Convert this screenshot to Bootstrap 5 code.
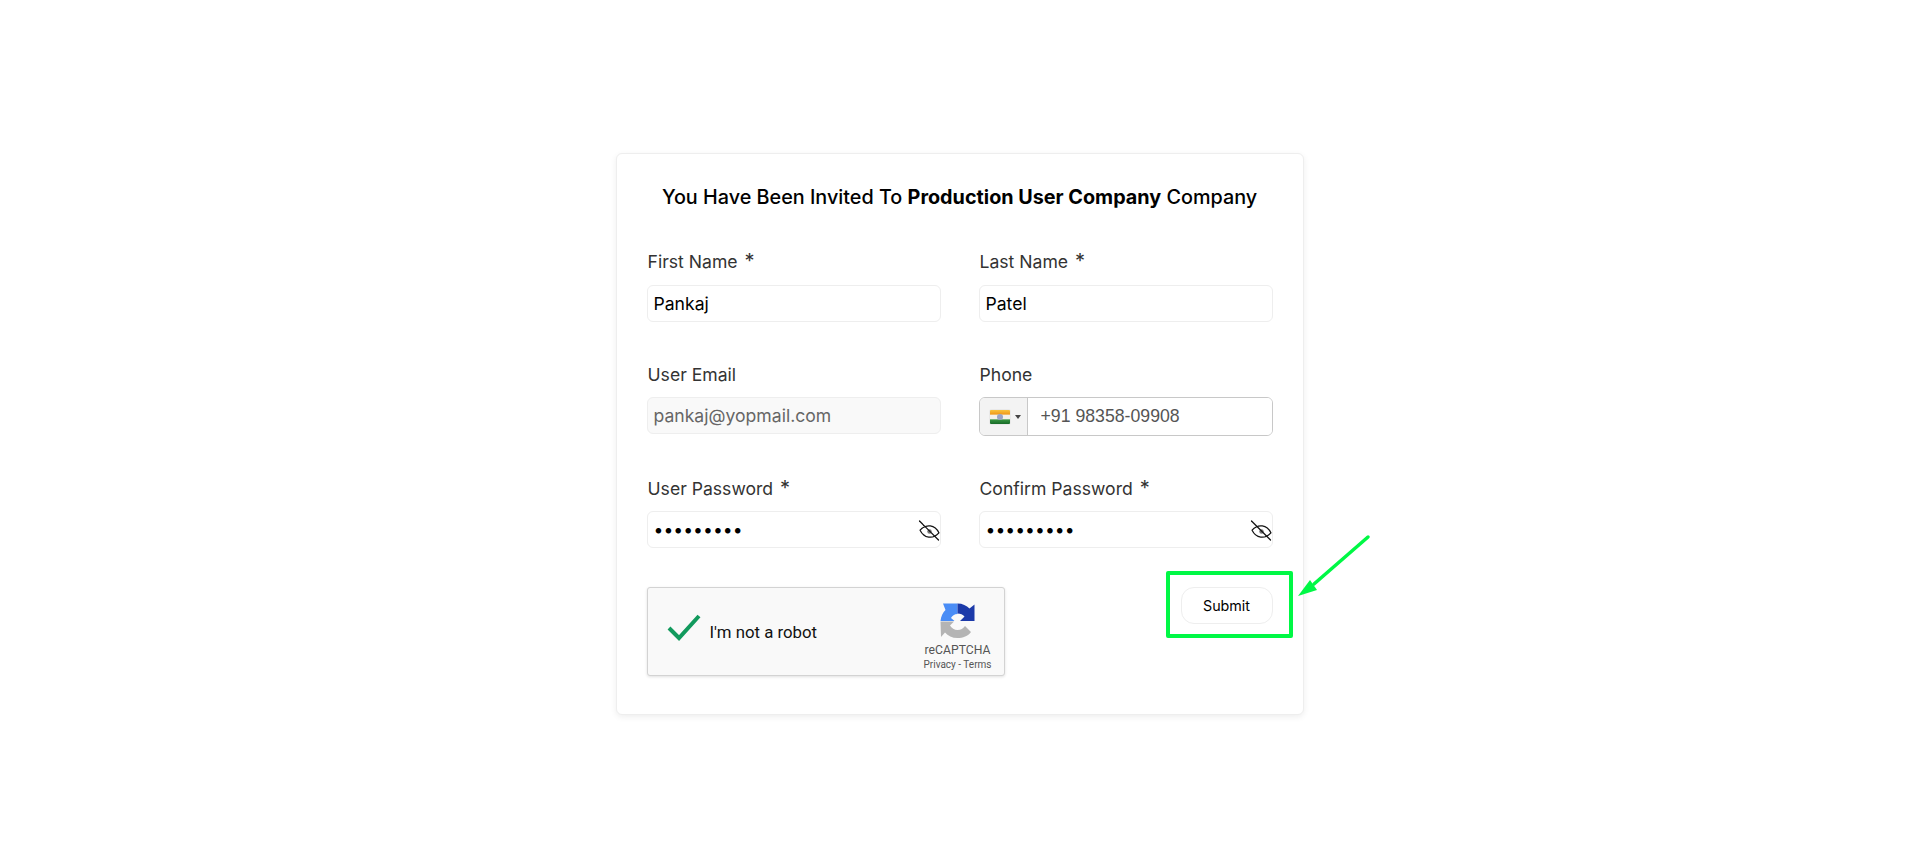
<!DOCTYPE html>
<html lang="en">
  <head>
    <meta charset="UTF-8" />
    <meta name="viewport" content="width=device-width, initial-scale=1.0" />
    <title>Invitation</title>
    <link href="https://cdn.jsdelivr.net/npm/bootstrap@5.3.0/dist/css/bootstrap.min.css" rel="stylesheet" />
    <style>
      body { font-family: "Inter", "Liberation Sans", sans-serif; background: #fff; }
      .page-wrap { min-height: 868px; position: relative; }
      .invite-box { width: 688px; height: 562px; padding: 29px 30px; border: 1px solid #eeeeee; border-radius: 6px; box-shadow: 0 2px 6px rgba(0,0,0,.07); }
      .invite-title { font-size: 19.8px; line-height: 28px; font-weight: 500; color: #000; margin-bottom: 39px; white-space: nowrap; }
      .invite-title b { font-weight: 700; }
      .form-rows { --bs-gutter-x: 38px; }
      .field-block { height: 113px; }
      .field-block-mid { height: 114px; }
      .field-label { font-size: 17.6px; line-height: 24px; font-weight: 400; color: #333; margin-bottom: 11px; padding-left: 1px; display: block; }
      .label-tight { margin-bottom: 10px; }
      .req { font-size: 20px; line-height: 16px; margin-left: 2px; }
      .field-input { height: 37px; padding: 0 6px; font-size: 17.6px; color: #000; border: 1px solid #eeeeee; border-radius: 6px; box-shadow: none; }
      .field-input:disabled { background: #f9f9f9; color: #666; border-color: #eeeeee; }
      .pwd-wrap { position: relative; }
      .eye-icon { position: absolute; right: 0; top: 5px; width: 24px; height: 26px; }
      .phone-wrap { height: 39px; border: 1px solid #c8c8c8; border-radius: 6px; overflow: hidden; }
      .flag-btn { width: 48px; background: #f3f3f3; border-right: 1px solid #c8c8c8; padding-left: 10px; }
      .flag-img { width: 20px; height: 14px; background: linear-gradient(#f9c33c 0, #f09a1c 30%, #f4f1ea 36% 64%, #34923f 70%, #176a28 100%); border-radius: 1px; box-shadow: 0 0 1px rgba(0,0,0,.4); position: relative; }
      .flag-img::after { content: ""; position: absolute; left: 7px; top: 4px; width: 6px; height: 6px; border-radius: 50%; background: #9aa4c4; }
      .flag-caret { width: 0; height: 0; margin-left: 5px; border-left: 3px solid transparent; border-right: 3px solid transparent; border-top: 4px solid #444; }
      .phone-input { border: 0; outline: 0; flex: 1; min-width: 0; padding-left: 13px; font-family: "Liberation Sans", sans-serif; font-size: 17.7px; color: #555; background: #fff; }
      .captcha-row { margin-top: -3px; }
      .captcha-box { width: 358px; height: 89px; background: #f9f9f9; border: 1px solid #d3d3d3; border-radius: 3px; box-shadow: 0 1px 3px rgba(0,0,0,.12); font-family: "Roboto", "Liberation Sans", sans-serif; padding-right: 12px; }
      .captcha-check { width: 34px; height: 28px; margin-left: 19px; margin-right: 9px; margin-top: -10px; }
      .captcha-label { font-size: 16.8px; color: #111; margin-top: 3px; }
      .captcha-side { width: 68px; padding-top: 15px; }
      .captcha-side svg { display: block; margin: 0 auto; }
      .captcha-name { font-size: 12.2px; line-height: 14px; color: #555; margin-top: 5px; white-space: nowrap; }
      .captcha-links { font-size: 10px; line-height: 12px; color: #555; white-space: nowrap; margin-top: 2px; }
      .send-btn { width: 92px; height: 37px; padding: 0; font-size: 14.3px; font-weight: 400; color: #000; background: #fff; border: 1px solid #eeeeee; border-radius: 13px; }
      .send-btn:hover { background: #fff; color: #000; border-color: #eee; }
      .green-frame { position: absolute; left: 1166px; top: 571px; width: 127px; height: 67px; border: 4px solid #00f845; border-radius: 2px; pointer-events: none; }
      .green-arrow { position: absolute; left: 1290px; top: 530px; width: 85px; height: 72px; pointer-events: none; }
    </style>
  </head>
  <body>
    <div class="page-wrap d-flex align-items-center justify-content-center">
      <div class="invite-box bg-white">
        <h5 class="invite-title text-center">You Have Been Invited To <b>Production User Company</b> Company</h5>

        <div class="row form-rows">
          <div class="col-6 field-block">
            <label class="field-label">First Name <span class="req">*</span></label>
            <input type="text" class="form-control field-input" value="Pankaj" />
          </div>
          <div class="col-6 field-block">
            <label class="field-label">Last Name <span class="req">*</span></label>
            <input type="text" class="form-control field-input" value="Patel" />
          </div>
          <div class="col-6 field-block-mid">
            <label class="field-label label-tight">User Email</label>
            <input type="text" class="form-control field-input" value="pankaj@yopmail.com" disabled />
          </div>
          <div class="col-6 field-block-mid">
            <label class="field-label label-tight">Phone</label>
            <div class="phone-wrap d-flex">
              <div class="flag-btn d-flex align-items-center">
                <div class="flag-img"></div>
                <div class="flag-caret"></div>
              </div>
              <input type="text" class="phone-input" value="+91 98358-09908" />
            </div>
          </div>
          <div class="col-6 field-block">
            <label class="field-label label-tight">User Password <span class="req">*</span></label>
            <div class="pwd-wrap">
              <input type="password" class="form-control field-input" value="123456789" />
              <svg class="eye-icon" viewBox="0 0 24 26" fill="none" stroke="#111" stroke-width="1.2" stroke-linecap="round">
                <path d="M3 15.500 C8 8 17 8 22 15.500 C17 23 8 23 3 15.500 Z" transform="rotate(8 12.500 15.500)" />
                <circle cx="12.500" cy="15.500" r="2.200" fill="#777" stroke="none" />
                <path d="M2.500 5 L21.500 24" />
              </svg>
            </div>
          </div>
          <div class="col-6 field-block">
            <label class="field-label label-tight">Confirm Password <span class="req">*</span></label>
            <div class="pwd-wrap">
              <input type="password" class="form-control field-input" value="123456789" />
              <svg class="eye-icon" viewBox="0 0 24 26" fill="none" stroke="#111" stroke-width="1.2" stroke-linecap="round">
                <path d="M3 15.500 C8 8 17 8 22 15.500 C17 23 8 23 3 15.500 Z" transform="rotate(8 12.500 15.500)" />
                <circle cx="12.500" cy="15.500" r="2.200" fill="#777" stroke="none" />
                <path d="M2.500 5 L21.500 24" />
              </svg>
            </div>
          </div>
        </div>

        <div class="captcha-row d-flex justify-content-between align-items-start">
          <div class="captcha-box d-flex align-items-center">
            <svg class="captcha-check" viewBox="0 0 34 28" fill="none" stroke="#129a5d" stroke-width="4">
              <path d="M2 15 L12 25 L32 3" />
            </svg>
            <span class="captcha-label flex-grow-1">I'm not a robot</span>
            <div class="captcha-side align-self-start text-center">
              <svg width="35" height="35" viewBox="0 0 35 35">
                <path fill="#4a8df6" d="M0.500 18 C1 13 3 9.500 5.500 7 L3 0.500 L17.500 0.500 L17.500 11 C14.500 11 12 13 11 15 L14.500 18 Z" />
                <path fill="#1c3aa9" d="M17.500 0.500 C22.500 0.500 26.500 2.500 29.500 5.500 L34.500 1.500 L34.500 18 L20 18 L24.500 13.500 C23 11.500 20.500 10.500 17.500 10.500 Z" />
                <path fill="#b4b4b4" d="M0.500 18.500 L14 18.500 L10 22.500 C11.500 25 14.500 27 17.500 27 C21 27 23 25.500 25 23 L31 29 C28 33 23 35 17.500 35 C12 35 8 33 5 29.500 L1 34 Z" />
              </svg>
              <div class="captcha-name">reCAPTCHA</div>
              <div class="captcha-links">Privacy - Terms</div>
            </div>
          </div>
          <button type="button" class="btn send-btn">Submit</button>
        </div>
      </div>

      <div class="green-frame"></div>
      <svg class="green-arrow" viewBox="0 0 85 72">
        <path d="M78 7 L24 54" stroke="#00f845" stroke-width="3.500" stroke-linecap="round" />
        <path d="M8 66 L20 50 L27 60 Z" fill="#00f845" />
      </svg>
    </div>
    <script src="https://cdn.jsdelivr.net/npm/bootstrap@5.3.0/dist/js/bootstrap.bundle.min.js"></script>
  </body>
</html>
